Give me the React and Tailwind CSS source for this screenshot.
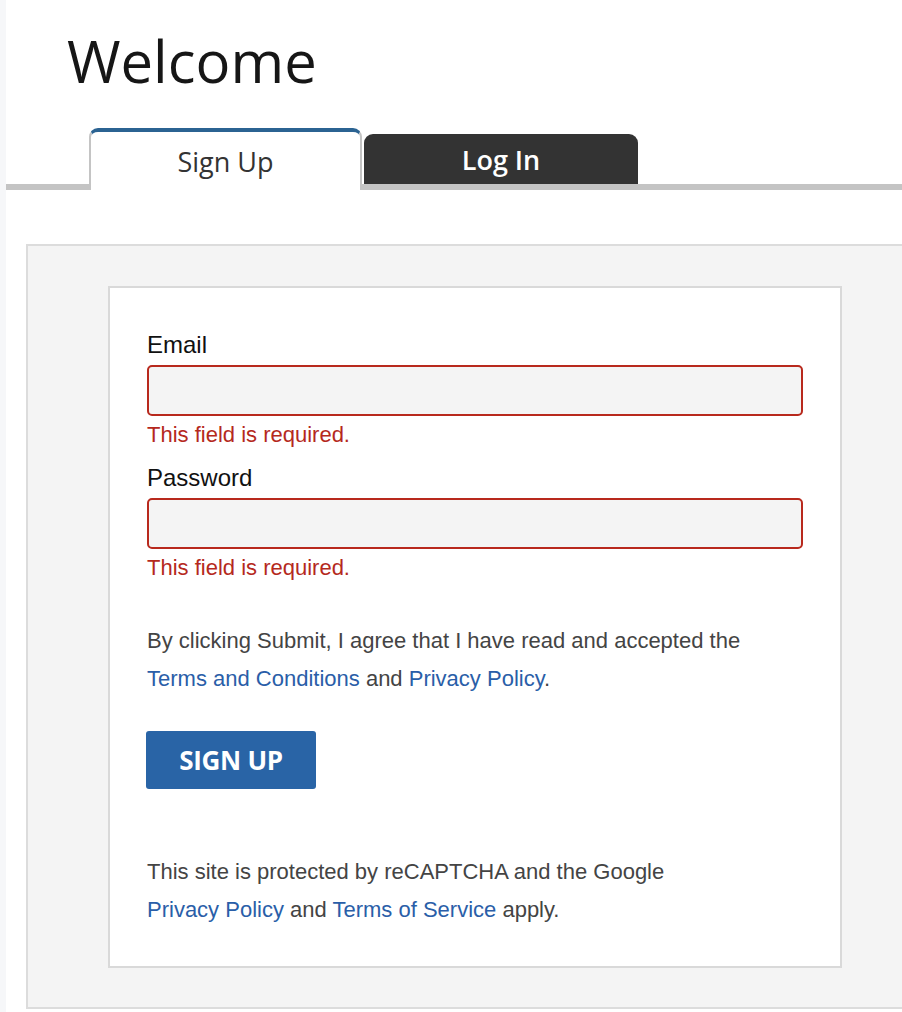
import React from 'react'

const sans = { fontFamily: '"Liberation Sans", Arial, sans-serif' }

const Field = ({ label, type }) => (
  <div>
    <label className="block text-[24px] leading-[30px] text-[#111]">{label}</label>
    <input
      type={type}
      className="mt-[5px] block w-full h-[51px] rounded-[5px] border-2 border-[#b8291d] bg-[#f4f4f4] px-3 outline-none"
    />
    <div className="mt-[4px] text-[22px] leading-[30px] text-[#b5291d]">This field is required.</div>
  </div>
)

const App = () => {
  return (
    <div className="min-h-screen w-full overflow-hidden bg-white flex">
      <div className="w-[6px] shrink-0 bg-[#f6f7f9]" />
      <div className="flex-1 min-w-0 pb-[20px]">
        <h1 className="mt-[32px] pl-[61px] text-[58px] leading-none text-[#161616] font-['Open_Sans',sans-serif]">
          Welcome
        </h1>

        <div className="mt-[38px] flex items-end pl-[83px] border-b-[6px] border-[#c4c4c4] font-['Open_Sans',sans-serif]">
          <button
            type="button"
            className="-mb-[6px] w-[273px] h-[62px] pt-[3px] rounded-t-[9px] border-x-2 border-t-[4px] border-x-[#c4c4c4] border-t-[#2b6392] bg-white text-[27px] text-[#333] flex items-center justify-center"
          >
            Sign Up
          </button>
          <button
            type="button"
            className="ml-[2px] w-[274px] h-[50px] pt-[2px] rounded-t-[9px] bg-[#333333] text-[27px] font-semibold text-white flex items-center justify-center"
          >
            Log In
          </button>
        </div>

        <div
          className="mt-[54px] ml-[20px] w-[898px] border-2 border-[#dcdcdc] bg-[#f4f4f4] pt-[40px] pb-[39px]"
          style={sans}
        >
          <div className="mx-auto w-[734px] border-2 border-[#d9d9d9] bg-white px-[37px] pt-[42px] pb-[37px]">
            <Field label="Email" type="email" />
            <div className="mt-[13px]">
              <Field label="Password" type="password" />
            </div>

            <p className="mt-[39px] text-[22px] leading-[38px] text-[#444]">
              By clicking Submit, I agree that I have read and accepted the{' '}
              <a href="#" className="text-[#2a5ea8]">Terms and Conditions</a> and{' '}
              <a href="#" className="text-[#2a5ea8]">Privacy Policy</a>.
            </p>

            <button
              type="button"
              className="mt-[33px] -ml-px w-[170px] h-[58px] rounded-[3px] bg-[#2964a6] text-white text-[26px] font-bold font-['Open_Sans',sans-serif] tracking-[-0.3px]"
            >
              SIGN UP
            </button>

            <p className="mt-[64px] text-[22px] leading-[38px] text-[#444]">
              This site is protected by reCAPTCHA and the Google
              <br />
              <a href="#" className="text-[#2a5ea8]">Privacy Policy</a> and{' '}
              <a href="#" className="text-[#2a5ea8]">Terms of Service</a> apply.
            </p>
          </div>
        </div>
      </div>
    </div>
  )
}

export default App
